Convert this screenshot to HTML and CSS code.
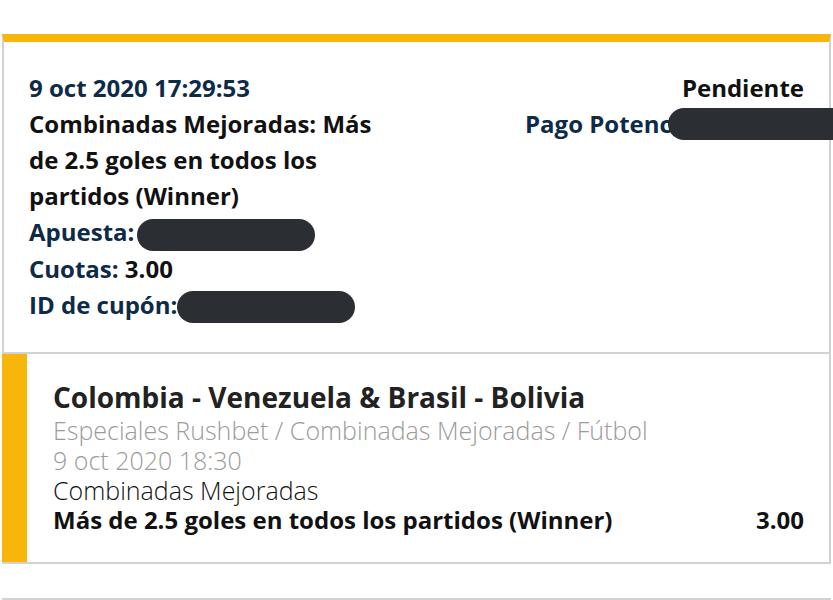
FILE: index.html
```html
<!DOCTYPE html>
<html lang="es">
  <head>
    <meta charset="UTF-8" />
    <meta name="viewport" content="width=device-width, initial-scale=1.0" />
    <title>Cupón</title>
    <link rel="stylesheet" href="styles.css">
  </head>
  <body>
    <div class="slip">
      <div class="summary">
        <div class="navy">9 oct 2020 17:29:53</div>
        <div class="status">Pendiente</div>

        <div class="details">
          <div class="market">Combinadas Mejoradas: Más de 2.5 goles en todos los partidos (Winner)</div>
          <div class="navy">Apuesta:<span class="hidden hidden-stake"></span></div>
          <div class="navy">Cuotas: <span class="dark">3.00</span></div>
          <div class="navy">ID de cupón:<span class="hidden hidden-id"></span></div>
        </div>
        <div class="payout navy">Pago Potencial: <span class="hidden hidden-payout"></span></div>
      </div>

      <div class="selection">
        <div class="accent"></div>
        <div class="selection-body">
          <div class="event">Colombia - Venezuela &amp; Brasil - Bolivia</div>
          <div class="muted">Especiales Rushbet / Combinadas Mejoradas / Fútbol</div>
          <div class="muted">9 oct 2020 18:30</div>
          <div class="bet-type">Combinadas Mejoradas</div>
          <div class="outcome">
            <span>Más de 2.5 goles en todos los partidos (Winner)</span>
            <span>3.00</span>
          </div>
        </div>
      </div>
    </div>

    <div class="slip slip-next"></div>
  </body>
</html>
```

FILE: styles.css
```css
html, body {
  overflow: hidden;
}
body {
  margin: 0;
  background: #fff;
  font-family: "Open Sans", "Noto Sans", sans-serif;
  color: #111;
}
.slip {
  margin: 34px 2px 0 2px;
  border-top: 8px solid #f8b50c;
  border-left: 2px solid #d2d2d2;
  border-right: 2px solid #d2d2d2;
}
.slip-next {
  border-top: 2px solid #d2d2d2;
  height: 40px;
}
.summary {
  display: grid;
  grid-template-columns: 496px minmax(0, 1fr);
  padding: 28px 25px 29px 25px;
  border-bottom: 2px solid #d2d2d2;
  font-size: 24px;
  font-weight: 700;
  line-height: 36px;
}
.navy {
  color: #0d2b48;
}
.dark {
  color: #111;
}
.status {
  justify-self: end;
  color: #111;
}
.details .market {
  width: 360px;
  color: #111;
}
.payout {
  align-self: start;
  height: 36px;
  white-space: nowrap;
  display: flex;
  align-items: center;
}
.hidden {
  display: inline-block;
  vertical-align: middle;
  height: 32px;
  border-radius: 16px;
  background: #2b2f33;
}
.hidden-stake {
  width: 178px;
  margin-left: 3px;
}
.hidden-id {
  width: 178px;
}
.hidden-payout {
  width: 200px;
  flex-shrink: 0;
  margin-left: -40px;
}
.selection {
  display: flex;
  border-bottom: 2px solid #d2d2d2;
}
.accent {
  width: 25px;
  margin-left: -2px;
  background: #f8b50c;
}
.selection-body {
  flex: 1;
  padding: 25px 25px 27px 26px;
  font-size: 24px;
  line-height: 30px;
}
.event {
  font-size: 28px;
  font-weight: 700;
  line-height: 36px;
  color: #222;
}
.muted {
  color: #9b9b9b;
  font-weight: 300;
  font-size: 25px;
}
.bet-type {
  font-weight: 300;
  font-size: 25px;
  color: #111;
}
.outcome {
  display: flex;
  justify-content: space-between;
  font-weight: 700;
  color: #111;
}
```
